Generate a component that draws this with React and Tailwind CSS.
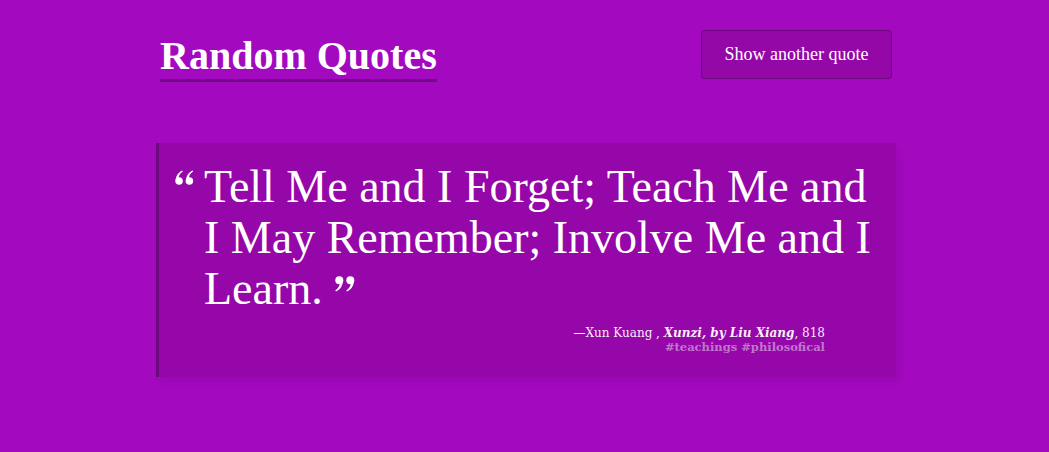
function QuoteMark({ className, flip }) {
  const mark = "M0.6,11 C0.8,6 3.4,2.4 7.6,0.4 L8.2,1.6 C5.2,3.6 3.8,6 3.8,8.4 Z"
  return (
    <svg viewBox="0 0 20 16" className={className} fill="currentColor">
      <g transform={flip ? "rotate(180 10 8)" : undefined}>
        <path d={mark} />
        <circle cx="4.2" cy="11.8" r="4" />
        <path d={mark} transform="translate(11 0)" />
        <circle cx="15.2" cy="11.8" r="4" />
      </g>
    </svg>
  )
}

export default function App() {
  return (
    <div className="min-h-screen bg-[#a309bf] pl-[3px] font-['Liberation_Serif',serif] text-white">
      <div className="mx-auto w-[740px] pt-[30px]">
        <header className="flex items-start justify-between px-1">
          <h1 className="mt-[3px] border-b-[3px] border-[#76098b] text-[40px] font-bold leading-[46px]">
            Random Quotes
          </h1>
          <button className="h-[49px] w-[191px] rounded-[3px] border border-[#6f0880] bg-[#9408a8] text-[18px] text-white">
            Show another quote
          </button>
        </header>

        <blockquote className="mt-[61px] rounded-r-[3px] border-l-[3px] border-[#6a0a7c] bg-[#9507a9] pt-[18px] pr-[14px] pb-[23px] pl-[45px] shadow-[3px_5px_6px_rgba(0,0,0,0.06)]">
          <p className="relative text-[46px] leading-[51px]">
            <QuoteMark className="absolute top-[9px] left-[-29px] h-[15px] w-[19px]" />
            Tell Me and I Forget; Teach Me and I May Remember; Involve Me and I Learn.
            <QuoteMark flip className="relative top-[13px] ml-[11px] inline-block h-[16px] w-[21px] align-top" />
          </p>
          <footer className="mt-[12px] mr-[57px] text-right font-['DejaVu_Serif',serif] leading-[14px]">
            <div className="text-[12px] text-white/95">
              —Xun Kuang , <cite className="font-bold italic">Xunzi, by Liu Xiang</cite>, 818
            </div>
            <div className="text-[11.5px] font-bold text-white/45">#teachings #philosofical</div>
          </footer>
        </blockquote>
      </div>
    </div>
  )
}
